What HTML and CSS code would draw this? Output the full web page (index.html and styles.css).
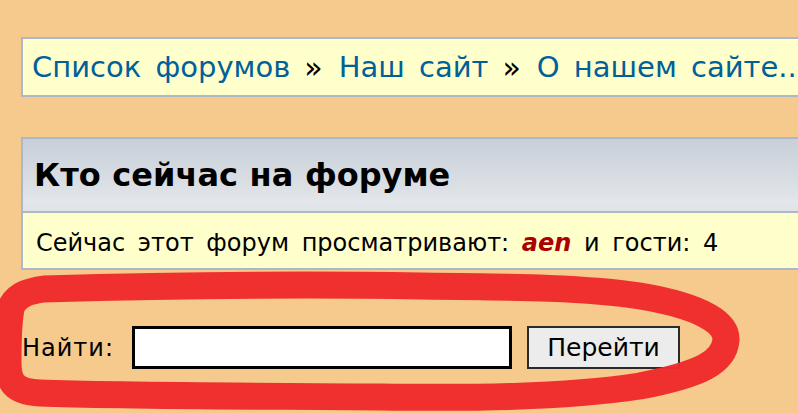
FILE: index.html
```html
<!DOCTYPE html>
<html lang="ru">
<head>
<meta charset="utf-8">
<title>Кто сейчас на форуме</title>
<link rel="stylesheet" href="styles.css">
</head>
<body>
<div class="page">
  <div class="navbox">
    <a class="nav-link" href="#">Список форумов</a><span class="sep">»</span><a class="nav-link" href="#">Наш сайт</a><span class="sep">»</span><a class="nav-link" href="#">О нашем сайте...</a>
  </div>

  <div class="panel">
    <div class="panel-head"><h2>Кто сейчас на форуме</h2></div>
    <div class="panel-body"><span>Сейчас этот форум просматривают: <b class="user">aen</b> и гости: 4</span></div>
  </div>

  <form class="jump">
    <label class="jump-label" for="q">Найти:</label>
    <input class="jump-input" id="q" type="text">
    <button class="jump-btn" type="button">Перейти</button>
  </form>
</div>

<svg class="scribble" width="798" height="413" viewBox="0 0 798 413" aria-hidden="true">
  <path d="M44 289 C150 286 300 284 420 286 C520 287 590 288 640 296 C700 306 727 322 726 340 C724 362 702 374 640 386 C560 398 470 398 380 397 C260 396 120 396 40 393 C14 392 8 382 8 362 C8 340 8 318 12 305 C18 294 30 291 44 289 Z"
        fill="none" stroke="#ee2a2c" stroke-width="27" stroke-linejoin="round" stroke-linecap="round" opacity="0.97"/>
</svg>
</body>
</html>
```
FILE: styles.css
```css
html, body {
  margin: 0;
  padding: 0;
  overflow: hidden;
  background: #f6ca8c;
}

body {
  font-family: "DejaVu Sans", Verdana, sans-serif;
  width: 798px;
  height: 413px;
  position: relative;
}

.page {
  padding: 37px 0 0 21px;
}

.navbox {
  height: 56px;
  border: 2px solid #aab8c8;
  border-right: 0;
  background: #ffffcc;
  display: flex;
  align-items: center;
  padding-left: 9px;
  font-size: 29px;
  word-spacing: 5px;
  white-space: nowrap;
  overflow: hidden;
}

.nav-link {
  color: #00609a;
  text-decoration: none;
}

.sep {
  color: #000;
  margin: 0 16px 0 14px;
  font-size: 30px;
}

.panel {
  margin-top: 40px;
  border: 2px solid #aab8c8;
  border-right: 0;
}

.panel-head {
  height: 72px;
  display: flex;
  align-items: center;
  padding-left: 11px;
  background: linear-gradient(to bottom, #c8cfd8 0%, #d8dde3 55%, #e3e6ea 88%, #dfe3e7 100%);
  border-bottom: 2px solid #aab8c8;
}

.panel-head h2 {
  margin: 0;
  font-size: 32px;
  font-weight: bold;
  word-spacing: 0.5px;
  color: #000;
  white-space: nowrap;
}

.panel-body {
  height: 51px;
  padding: 4px 0 0 13px;
  background: #ffffcc;
  display: flex;
  align-items: center;
  font-size: 24px;
  word-spacing: 5px;
  color: #000;
  white-space: nowrap;
}

.user {
  color: #aa0000;
  font-style: italic;
}

.jump {
  margin: 56px 0 0 1px;
  display: flex;
  align-items: center;
}

.jump-label {
  font-size: 24px;
  letter-spacing: 1px;
  color: #000;
  width: 110px;
}

.jump-input {
  box-sizing: border-box;
  width: 380px;
  height: 43px;
  border: 3px solid #000;
  background: #fff;
  margin: 0;
  padding: 0 6px;
}

.jump-btn {
  box-sizing: border-box;
  margin-left: 15px;
  width: 153px;
  height: 43px;
  border: 2px solid #2a2a2a;
  background: #ececec;
  font-family: "DejaVu Sans", Verdana, sans-serif;
  font-size: 25px;
  color: #000;
  padding: 0;
}

.scribble {
  position: absolute;
  left: 0;
  top: 0;
  pointer-events: none;
}
```
